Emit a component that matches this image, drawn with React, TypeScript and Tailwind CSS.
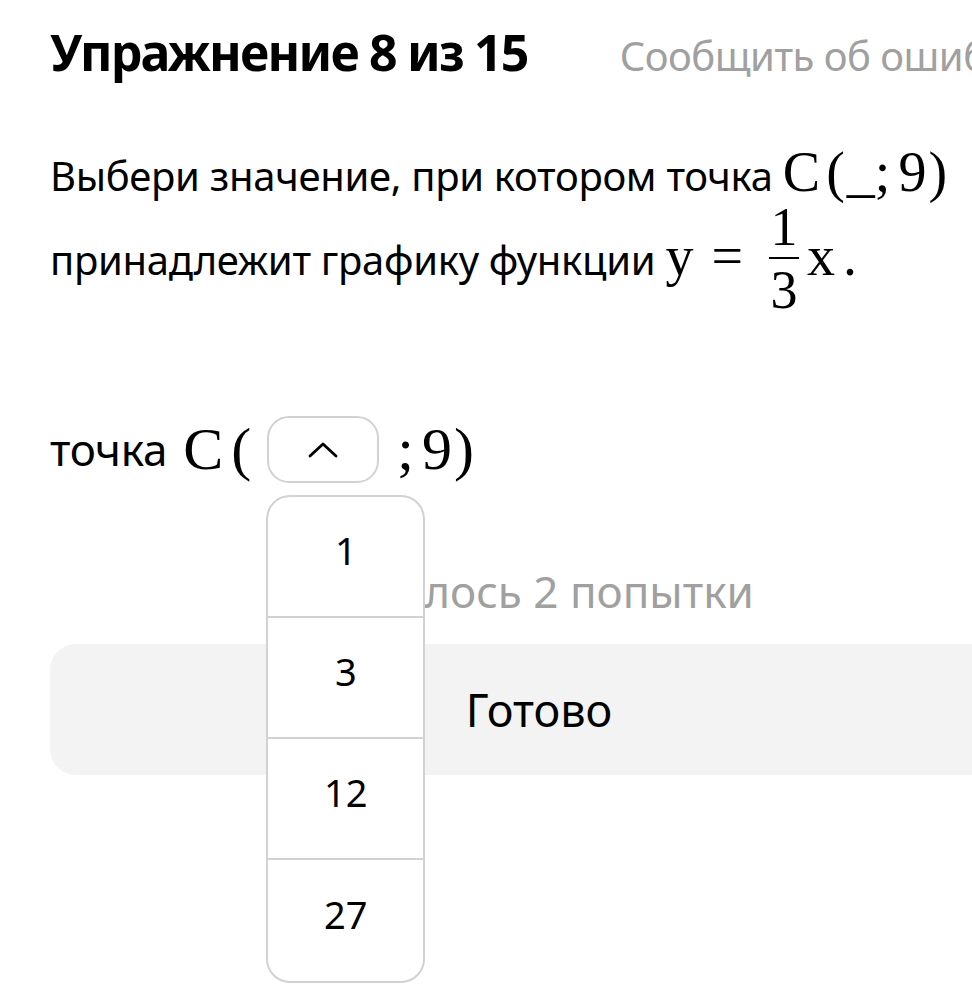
import { useState } from 'react';

const mathFont = "font-['Liberation_Serif','DejaVu_Serif',serif]";

const options = ['1', '3', '12', '27'];

function Fraction({ top, bottom }: { top: string; bottom: string }) {
  return (
    <span className="inline-flex flex-col items-center align-middle mx-[8px] leading-none text-[54px] -translate-y-[4px]">
      <span className="pb-[3px]">{top}</span>
      <span className="w-[30px] h-[2px] bg-black" />
      <span className="pt-[4px]">{bottom}</span>
    </span>
  );
}

export default function App() {
  const [open, setOpen] = useState(true);
  const [value, setValue] = useState<string | null>(null);

  return (
    <div className="w-[972px] h-[1004px] overflow-hidden bg-white text-black font-['Noto_Sans',sans-serif]">
      <div className="w-[978px] ml-[50px] pt-[24px]">
        <div className="flex items-baseline justify-between">
          <h1 className="text-[50px] leading-[56px] font-bold tracking-[-1.8px]">Упражнение 8 из 15</h1>
          <span className="text-[40px] leading-[56px] text-[#a0a0a0] tracking-[-0.5px]">Сообщить об ошибке</span>
        </div>

        <p className="mt-[60px] text-[40px] leading-[56px] tracking-[-0.3px]">
          Выбери значение, при котором точка{' '}
          <span className={`${mathFont} text-[56px] tracking-normal`}>
            C<span className="ml-[6px]">(</span>
            <span className="ml-[2px]">_</span>;<span className="ml-[8px]">9</span>
            <span className="ml-[2px]">)</span>
          </span>
          <br />
          принадлежит графику функции{' '}
          <span className={`${mathFont} text-[56px] tracking-normal`}>
            y<span className="mx-[18px]">=</span>
            <Fraction top="1" bottom="3" />
            x<span className="ml-[8px]">.</span>
          </span>
        </p>

        <div className="mt-[83px] flex items-center text-[44px]">
          <span className="tracking-[-0.3px]">точка&nbsp;</span>
          <span className={`${mathFont} text-[60px] ml-[5px]`}>
            C<span className="ml-[8px]">(</span>
          </span>
          <div className="relative ml-[16px]">
            <button
              onClick={() => setOpen(!open)}
              className="w-[112px] h-[67px] rounded-[22px] border-2 border-[#d2d2d2] bg-white flex items-center justify-center"
            >
              {value ? (
                <span className="text-[36px]">{value}</span>
              ) : (
                <svg width="30" height="17" viewBox="0 0 30 17" fill="none">
                  <polyline points="2,15 15,3 28,15" stroke="black" strokeWidth="2.8" strokeLinecap="round" strokeLinejoin="round" />
                </svg>
              )}
            </button>
            {open && (
              <div className="absolute -left-px top-[79px] w-[159px] rounded-[24px] border-2 border-[#d2d2d2] bg-white z-10 overflow-hidden">
                {options.map((o, i) => (
                  <div
                    key={o}
                    onClick={() => {
                      setValue(o);
                      setOpen(false);
                    }}
                    className={`h-[121px] flex items-center justify-center text-[38px] cursor-pointer ${
                      i < options.length - 1 ? 'border-b-2 border-[#d2d2d2]' : ''
                    }`}
                  >
                    <span className="-translate-y-[6px]">{o}</span>
                  </div>
                ))}
              </div>
            )}
          </div>
          <span className={`${mathFont} text-[60px] ml-[18px]`}>
            ;<span className="ml-[8px]">9</span>
            <span className="ml-[2px]">)</span>
          </span>
        </div>

        <div className="mt-[69px] text-center text-[44px] leading-[56px] text-[#a0a0a0]">Осталось 2 попытки</div>

        <button className="mt-[25px] w-full h-[131px] rounded-[26px] bg-[#f3f3f3] text-[45px]">Готово</button>
      </div>
    </div>
  );
}
